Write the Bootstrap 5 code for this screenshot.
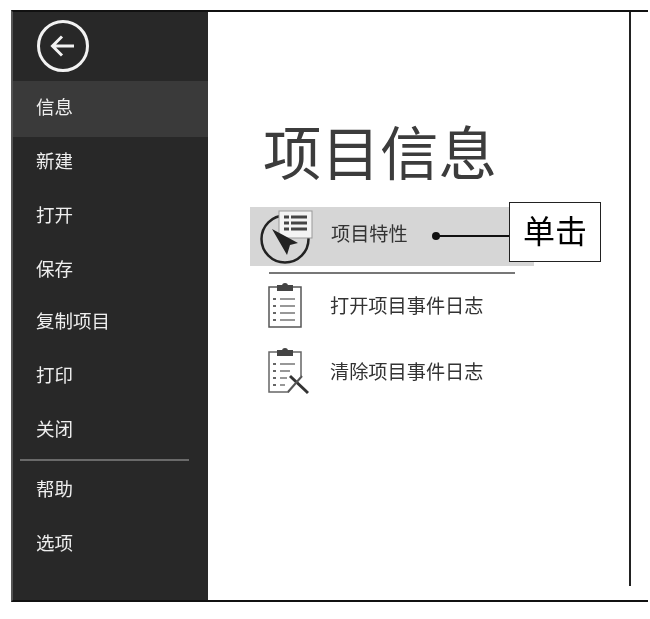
<!DOCTYPE html>
<html lang="zh-CN">
<head>
  <meta charset="UTF-8">
  <meta name="viewport" content="width=device-width, initial-scale=1">
  <title>项目信息</title>
  <link href="https://cdn.jsdelivr.net/npm/bootstrap@5.3.0/dist/css/bootstrap.min.css" rel="stylesheet">
  <style>
    body {
      background: #fff;
      font-family: "Liberation Sans", "Noto Sans CJK SC", sans-serif;
      overflow: hidden;
    }
    .shot {
      filter: blur(.7px);
      padding: 10px 0 0 11px;
    }
    .frame {
      width: 637px;
      height: 592px;
      border-top: 2px solid #111;
      border-bottom: 2px solid #111;
      border-left: 2px solid #555;
    }
    .side {
      width: 195px;
      background: #282828;
    }
    .back-wrap { height: 69px; padding: 8px 0 0 24px; }
    .side-link {
      height: 54px;
      padding: 0 0 0 23px;
      color: #eee;
      font-size: 18.5px;
    }
    .side-link:hover { color: #fff; }
    .side-link.on { height: 56px; padding-bottom: 2px; margin-bottom: -2px; background: #3a3a3a; }
    .side-link.tight { margin-top: -2px; }
    .side-rule { margin: 2px 19px 2px 7px; height: 2px; background: #6a6a6a; border: 0; opacity: 1; }
    .pane { width: 423px; height: 574px; border-right: 2px solid #222; margin-bottom: 14px; background: #fff; padding: 96px 0 0 42px; position: relative; }
    .pane-title { font-size: 58.5px; line-height: 82px; color: #3c3c3c; font-weight: 400; margin: 6px 0 11px 13px; }
    .act { color: #333; font-size: 19.2px; height: 59px; text-decoration: none; }
    .act-main { width: 284px; background: #d6d6d6; padding-left: 9px; }
    .act-main .act-text { margin-left: 18px; margin-bottom: 2px; }
    .act-rule { width: 246px; height: 2px; margin: 6px 0 0 19px; background: #777; border: 0; opacity: 1; }
    .act-plain { padding-left: 18px; height: 66px; }
    .act-plain svg { margin-top: -4px; }
    .act-text { margin-left: 28px; }
    .act-text.wide-icon { margin-left: 20px; }
    .callout {
      position: absolute;
      left: 301px;
      top: 190px;
      width: 92px;
      height: 60px;
      border: 1px solid #222;
      background: #fff;
      color: #000;
      font-size: 32px;
    }
    .pointer { position: absolute; left: 223px; top: 219px; width: 78px; height: 10px; }
  </style>
</head>
<body>
  <div class="shot">
    <div class="frame d-flex">
      <!-- Left menu -->
      <nav class="side d-flex flex-column">
        <div class="back-wrap">
          <svg width="52" height="52" viewBox="0 0 52 52" fill="none" stroke="#f2f2f2">
            <circle cx="26" cy="26" r="24.5" stroke-width="3"/>
            <path d="M37 26H16M25 16.5 15.5 26l9.500 9.500" stroke-width="3"/>
          </svg>
        </div>
        <a class="side-link on d-flex align-items-center text-decoration-none" href="#">信息</a>
        <a class="side-link d-flex align-items-center text-decoration-none" href="#">新建</a>
        <a class="side-link d-flex align-items-center text-decoration-none" href="#">打开</a>
        <a class="side-link d-flex align-items-center text-decoration-none" href="#">保存</a>
        <a class="side-link tight d-flex align-items-center text-decoration-none" href="#">复制项目</a>
        <a class="side-link d-flex align-items-center text-decoration-none" href="#">打印</a>
        <a class="side-link d-flex align-items-center text-decoration-none" href="#">关闭</a>
        <hr class="side-rule">
        <a class="side-link d-flex align-items-center text-decoration-none" href="#">帮助</a>
        <a class="side-link d-flex align-items-center text-decoration-none" href="#">选项</a>
      </nav>

      <!-- Content -->
      <main class="pane">
        <h1 class="pane-title">项目信息</h1>

        <a class="act act-main d-flex align-items-center" href="#">
          <svg width="54" height="54" viewBox="0 0 54 54" fill="none">
            <circle cx="26" cy="29" r="23.500" stroke="#222" stroke-width="2.500"/>
            <rect x="20" y="1" width="33" height="27" fill="#f4f4f4" stroke="#999"/>
            <path d="M25 7h5M25 13h5M25 19h5M32 7h16M32 13h16M32 19h16" stroke="#444" stroke-width="3"/>
            <path d="M13 19 39 33 31 35 28 45 Z" fill="#222"/>
          </svg>
          <span class="act-text">项目特性</span>
        </a>
        <hr class="act-rule">

        <a class="act act-plain d-flex align-items-center" href="#">
          <svg width="34" height="46" viewBox="0 0 34 46" fill="none">
            <path d="M9 5H1v40h32V5h-8" stroke="#555" stroke-width="1.500"/>
            <path d="M10 8V4h5a2 2 0 0 1 4 0h5v4Z" fill="#444" stroke="#444" stroke-width="2"/>
            <path d="M12 17h15M12 24h15M12 31h15M12 38h15" stroke="#777" stroke-width="1.500"/>
            <path d="M5 17h3M5 24h3M5 31h3M5 38h3" stroke="#666" stroke-width="2"/>
          </svg>
          <span class="act-text">打开项目事件日志</span>
        </a>

        <a class="act act-plain d-flex align-items-center" href="#">
          <svg width="42" height="48" viewBox="0 0 42 48" fill="none">
            <path d="M9 5H1v40h20M25 5h8v24" stroke="#666" stroke-width="1.500"/>
            <path d="M10 8V4h5a2 2 0 0 1 4 0h5v4Z" fill="#444" stroke="#444" stroke-width="2"/>
            <path d="M12 17h15M12 24h10M12 31h7M12 38h5" stroke="#777" stroke-width="1.500"/>
            <path d="M5 17h3M5 24h3M5 31h3M5 38h3" stroke="#666" stroke-width="2"/>
            <path d="M22 29 40 46" stroke="#333" stroke-width="3"/>
            <path d="M34 29 20 45" stroke="#555" stroke-width="2"/>
          </svg>
          <span class="act-text wide-icon">清除项目事件日志</span>
        </a>

        <svg class="pointer" viewBox="0 0 78 10">
          <circle cx="5" cy="5" r="4" fill="#111"/>
          <path d="M5 5h73" stroke="#111" stroke-width="2"/>
        </svg>
        <div class="callout d-flex align-items-center justify-content-center">单击</div>
      </main>
    </div>
  </div>
  <script src="https://cdn.jsdelivr.net/npm/bootstrap@5.3.0/dist/js/bootstrap.bundle.min.js"></script>
</body>
</html>
